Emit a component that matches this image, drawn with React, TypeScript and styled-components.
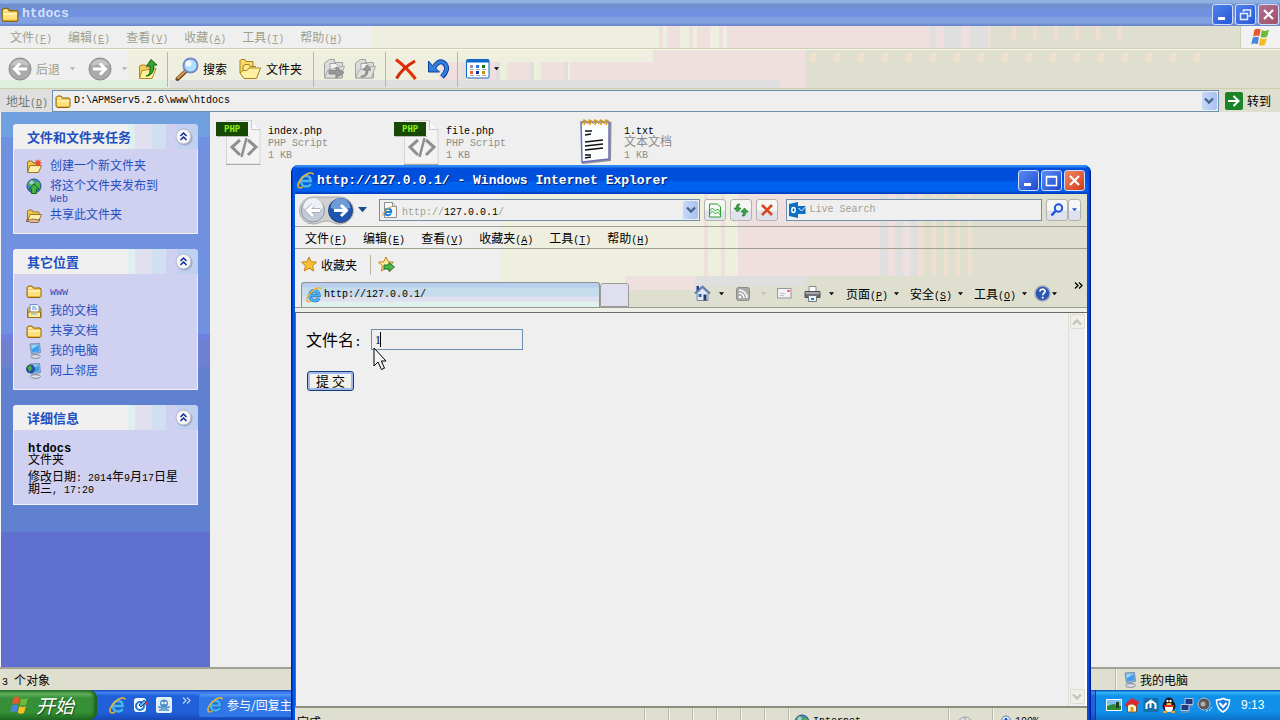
import React from "react";
import styled, { createGlobalStyle, css } from "styled-components";

const Global = createGlobalStyle`
  * { box-sizing: border-box; }
  body {
    margin: 0;
    overflow: hidden;
    font: 12px/16px "Noto Sans CJK SC", "Liberation Sans", sans-serif;
    color: #000;
    background: #efefef;
  }
  button, input { font: inherit; color: inherit; margin: 0; padding: 0; border: 0; background: none; }
  ul, p, h2 { margin: 0; padding: 0; list-style: none; }
  svg { display: block; flex: none; }
`;

/* ---------- text ---------- */

const Latin = styled.span<{ $size?: number }>`
  font-family: "Liberation Mono", monospace;
  font-size: ${(p) => p.$size ?? 10}px;
  line-height: 0;
  white-space: pre-wrap;
`;

/** Sets Latin runs in the half-width face and leaves Chinese runs alone. */
const Mixed = ({ children, size }: { children: string; size?: number }) => (
  <>
    {children.split(/([\x20-\x7e]+)/).map((run, i) =>
      i % 2 ? <Latin key={i} $size={size}>{run}</Latin> : run
    )}
  </>
);

const Caption = ({ label, hot }: { label: string; hot: string }) => (
  <span>
    {label}
    <Latin>(<u>{hot}</u>)</Latin>
  </span>
);

/* ---------- icons ---------- */

const Folder = ({ s = 16 }: { s?: number }) => (
  <svg width={s} height={s} viewBox="0 0 16 16">
    <path d="M1 13V4.5L2.5 3H6l1.5 2H14l1 1v7.5L14 14.5H2z" fill="#e9b93a" stroke="#8f6410" />
    <path d="M2 6.8h12.2V13H2z" fill="#ffe07a" />
    <path d="M2 6.8h12.2v2H2z" fill="#fff2b4" />
    <path d="M2 5l1-1h2.500l1.500 2H2z" fill="#fff0a0" />
  </svg>
);

const OpenFolder = ({ children }: { children?: React.ReactNode }) => (
  <svg width="16" height="16" viewBox="0 0 16 16">
    <path d="M1.500 14V4l1-1H6l1 2h6v3" fill="#f0c850" stroke="#9b7420" />
    <path d="M1.500 14.500L4 7.500h11.500L12.500 14.500z" fill="#fff0a8" stroke="#9b7420" />
    {children}
  </svg>
);

const Globe = ({ s = 16, arrow }: { s?: number; arrow?: boolean }) => (
  <svg width={s} height={s} viewBox="0 0 16 16">
    <circle cx="8" cy="8" r="7" fill="#3f86d8" stroke="#234f80" />
    <path d="M3 4l3-2 3 1-1 3-3 2-3-1zM10 4l3 0 1 5-3 3-2-3zM4 10l3 1v3l-3-2z" fill="#57b545" />
    <circle cx="5.500" cy="4.500" r="2" fill="#d6efff" opacity=".6" />
    {arrow && <path d="M8 6l5 5h-2.500v4.500h-5V11H3z" fill="#46b046" stroke="#12651c" />}
  </svg>
);

const Monitor = ({ s = 16, globe }: { s?: number; globe?: boolean }) => (
  <svg width={s} height={s} viewBox="0 0 16 16">
    <path d="M4 1l9.500-.5L14.500 9.500l-9 1.500z" fill="#8fb6dc" stroke="#7690b0" />
    <path d="M5.200 2.300l7.300-.4.8 6.400-7.200 1z" fill="#3f9df0" />
    <path d="M5.200 2.300l7.300-.4-6.800 4.300z" fill="#9ad8ff" />
    <path d="M8 10.500h4v2H8z" fill="#a9b3c4" />
    <ellipse cx="9.500" cy="13.500" rx="5" ry="1.800" fill="#dfe4ec" stroke="#7d8798" />
    {globe && (
      <>
        <circle cx="4.500" cy="6" r="4" fill="#2458a8" stroke="#1c4a78" />
        <path d="M1.500 4l3-1.500 1.500 3-2.500 3.500z" fill="#52b03e" />
      </>
    )}
  </svg>
);

const DocsFolder = () => (
  <svg width="16" height="16" viewBox="0 0 16 16">
    <path d="M1.500 6l2-2h10l1.500 2v8.500h-13.500z" fill="#ecc24c" stroke="#94701c" />
    <path d="M4 1.500h7l2 2V10H4z" fill="#f7fbff" stroke="#6c90c4" />
    <path d="M6 4h4M6 6h5" stroke="#5c8cd8" />
    <path d="M2 9h12.500v5.500H2z" fill="#ffeda0" stroke="#94701c" />
    <path d="M5 11h6" stroke="#7fa6d4" />
  </svg>
);

const IE = ({ s = 16 }: { s?: number }) => (
  <svg width={s} height={s} viewBox="0 0 16 16">
    <path d="M12.800 11.200C12 12.800 10.500 13.600 8.500 13.600 5.500 13.600 3.800 11.500 3.800 8.700 3.800 5.800 5.700 3.800 8.500 3.800c2.700 0 4.400 1.900 4.400 4.700H4.500" fill="none" stroke="#1668b8" strokeWidth="3.400" />
    <path d="M12.800 11.200C12 12.800 10.500 13.600 8.500 13.600 5.500 13.600 3.800 11.500 3.800 8.700 3.800 5.800 5.700 3.800 8.500 3.800c2.700 0 4.400 1.900 4.400 4.700H4.500" fill="none" stroke="#4cb4f6" strokeWidth="2.200" />
    <path d="M2.300 15C-.5 14 1.300 8.500 5.700 4.500 10 .7 15-.3 15.300 2.400" fill="none" stroke="#efb530" strokeWidth="1.500" />
    <path d="M2.300 15c1 .2 2.300-.4 3.200-1" fill="none" stroke="#efb530" strokeWidth="1.200" />
  </svg>
);

const IEPage = () => (
  <svg width="16" height="16" viewBox="0 0 16 16">
    <path d="M2.500.5h8l4 4v11h-12z" fill="#fafafa" stroke="#909090" />
    <path d="M10.500.5v4h4" fill="#e4e4e4" stroke="#909090" />
    <path d="M9 11.500C8.500 12.800 7.500 13.300 6.200 13.300 4.200 13.300 3 12 3 10s1.300-3.300 3.200-3.300S9.200 8 9.200 9.900H3.500" fill="none" stroke="#1c7fdc" strokeWidth="2" />
    <path d="M1 14C0 12.500 4 6.500 10 4.500" fill="none" stroke="#e8a820" strokeWidth="1.200" />
  </svg>
);

const Flag = ({ s = 20 }: { s?: number }) => (
  <svg width={s} height={s} viewBox="0 0 20 20">
    <path d="M3.500 2.800C5.500 1.400 7.500 1.400 9.700 2.500L8.300 9.200C6.300 8.200 4.200 8.200 2 9.400z" fill="#e8562c" />
    <path d="M10.900 3C13 4.200 15.300 4.200 18 2.800L16.200 9.600c-2.300 1.300-4.400 1.300-6.600.1z" fill="#6fb83c" />
    <path d="M1.700 10.700c2.200-1.200 4.300-1.200 6.300-.2L6.600 17.200C4.500 16.200 2.400 16.200.2 17.400z" fill="#4a86e0" />
    <path d="M9.300 11c2.200 1.200 4.300 1.200 6.600-.1l-1.800 6.800c-2.200 1.300-4.200 1.300-6.300.1z" fill="#f6bd24" />
  </svg>
);

const RoundArrow = ({ right }: { right?: boolean }) => (
  <svg width="24" height="24" viewBox="0 0 24 24">
    <circle cx="12" cy="12" r="11" fill="#a9a9a9" stroke="#8c8c8c" />
    <path d="M3 9a9.500 9.500 0 0 1 18 0c-5-2-13-2-18 0z" fill="#c6c6c6" />
    <path d="M19 12H7M12 6.500L6.500 12l5.500 5.500" fill="none" stroke="#fff" strokeWidth="3" transform={right ? "rotate(180 12 12)" : undefined} />
  </svg>
);

const UpFolder = () => (
  <svg width="22" height="22" viewBox="0 0 22 22">
    <path d="M2.500 20V8l2-1h4l1 2h7v4" fill="#f2cf5c" stroke="#b08824" />
    <path d="M2.500 20.500L5 12.500l14-2-4 10z" fill="#fff09a" stroke="#b08824" />
    <path d="M9 18c4-1 4.500-5 4-10H9.500L14 1.500 20 7h-3.200c.4 6-2 11-7.800 11z" fill="#3aa32e" stroke="#12621a" />
  </svg>
);

const Magnifier = () => (
  <svg width="24" height="24" viewBox="0 0 24 24">
    <path d="M11 14L2.500 22" stroke="#6a4a24" strokeWidth="4" strokeLinecap="round" />
    <path d="M10 14.500L3 21" stroke="#dd9a48" strokeWidth="2" strokeLinecap="round" />
    <circle cx="15.500" cy="8.500" r="7" fill="#aee0ff" stroke="#7489cc" strokeWidth="2" />
    <circle cx="13.500" cy="6.500" r="3" fill="#fff" opacity=".8" />
  </svg>
);

const Folders = () => (
  <svg width="24" height="22" viewBox="0 0 24 22">
    <path d="M2 15V2.500L3 1.500h4l1 2h7V8" fill="#f6d968" stroke="#a9811e" />
    <path d="M5 19V8l2-1.500h4l1 2h6" fill="#ffe98c" stroke="#a9811e" />
    <path d="M2 15l4 5.500h12.500L22.500 10H11l-2 2.500H5z" fill="#fff1a0" stroke="#a9811e" />
  </svg>
);

const GreyTransfer = ({ up }: { up?: boolean }) => (
  <svg width="24" height="22" viewBox="0 0 24 22">
    <path d="M2.500 20V5l5-3.500h5v3h8V20z" fill="#dcdcdc" stroke="#a0a0a0" />
    <path d="M8 5.500h6l3 3V17H8z" fill="#f2f2f2" stroke="#a0a0a0" />
    <path d="M2.500 20l3.500-8 16.500-4-4 12z" fill="#e0e0dc" stroke="#a8a8a8" />
    <path d={up ? "M8 18c4 0 5-2 5-6h-3l4-5 4 5h-3c0 5-2 7-7 7z" : "M7 12.500h7V9l8 5.500-8 5.500v-4H7z"} fill="#989898" stroke="#858585" />
  </svg>
);

const Cross = () => (
  <svg width="24" height="24" viewBox="0 0 24 24">
    <path d="M2 2.500C8 7 17 16 21.500 22" stroke="#e23208" strokeWidth="3.200" fill="none" />
    <path d="M21 4C14 8 6 15 2.500 21.500" stroke="#d42a06" strokeWidth="3" fill="none" />
  </svg>
);

const Undo = () => (
  <svg width="22" height="22" viewBox="0 0 22 22">
    <path d="M6 11C9 5 13 2 17 5c5 4 2 10-2 14" fill="none" stroke="#0d3f9c" strokeWidth="5" />
    <path d="M1.500 3v11h11l-3.500-3.500-3.500-3z" fill="#2f7fdd" stroke="#0d3f9c" />
    <path d="M6 11C9 5 13 2 17 5c5 4 2 10-2 13.500" fill="none" stroke="#2f7fdd" strokeWidth="3" />
  </svg>
);

const Views = () => (
  <svg width="24" height="20" viewBox="0 0 24 20">
    <rect x=".5" y=".5" width="22.500" height="18.500" rx="1" fill="#fff" stroke="#1068c8" />
    <path d="M1 1h22v2.500H1z" fill="#1068c8" />
    <path d="M4 6h3v3H4z" fill="#8c8cc4" /><path d="M10 6h3v3h-3z" fill="#2878e8" /><path d="M16 6h3v3h-3z" fill="#187818" />
    <path d="M4 12h3v3H4z" fill="#e86038" /><path d="M10 12h3v3h-3z" fill="#1030a0" /><path d="M16 12h3v3h-3z" fill="#c8980c" />
    <path d="M4 10.500h4M10 10.500h4M16 10.500h4M4 16.500h4M10 16.500h4M16 16.500h4" stroke="#aaa" />
  </svg>
);

const Caret = ({ fill = "#000", w = 5 }: { fill?: string; w?: number }) => (
  <svg width={w} height={w > 5 ? 6 : 4} viewBox="0 0 6 4"><path d="M0 0h6L3 3.500z" fill={fill} /></svg>
);

const Chevron = ({ color = "#46648c" }: { color?: string }) => (
  <svg width="10" height="8" viewBox="0 0 10 8"><path d="M1 1.500l4 4 4-4" fill="none" stroke={color} strokeWidth="2.400" /></svg>
);

const DoubleRight = ({ color = "#000" }: { color?: string }) => (
  <svg width="9" height="7" viewBox="0 0 9 7"><path d="M1 .5l3 3-3 3M5 .5l3 3-3 3" fill="none" stroke={color} strokeWidth="1.300" /></svg>
);

const Collapse = () => (
  <svg width="18" height="18" viewBox="0 0 18 18">
    <circle cx="9.800" cy="9.800" r="7.800" fill="#8c98b8" opacity=".6" />
    <circle cx="8.500" cy="8.500" r="7.500" fill="#f6f6f6" stroke="#b0b4cc" />
    <path d="M5.500 8l3-3 3 3M5.500 12l3-3 3 3" fill="none" stroke="#0c2c98" strokeWidth="1.500" />
  </svg>
);

const PhpFile = () => (
  <svg width="48" height="48" viewBox="0 0 48 48">
    <path d="M10.500 2.500h25l8.500 9v34.500h-33.500z" fill="#f3f3f3" stroke="#d4d4d4" />
    <path d="M10 46.500h34.500" stroke="#a8a8a8" />
    <path d="M35.500 2.500v9H44" fill="#fafafa" stroke="#c8c8c8" />
    <path d="M0 4h32v14H0z" fill="#184806" />
    <path d="M1 18.500h32" stroke="#b8b8b8" />
    <text x="8" y="14" fontFamily="DejaVu Sans Mono" fontWeight="bold" fontSize="9" fill="#8cf018">PHP</text>
    <path d="M24 22l-8 7 8 8M32 22l8 7-8 8" fill="none" stroke="#8f8f8f" strokeWidth="3" />
    <path d="M30.500 20l-5 19" stroke="#8f8f8f" strokeWidth="2.500" />
  </svg>
);

const Notepad = () => (
  <svg width="48" height="48" viewBox="0 0 48 48">
    <path d="M10 45l28-3 .5-38" fill="none" stroke="#8f8f96" strokeWidth="2" />
    <path d="M9 4h28v37L10 44z" fill="#fbfdff" stroke="#6d70b8" strokeWidth="1.500" />
    <path d="M10 6l2-4 2 1-2 4M15.500 6l2-4 2 1-2 4M21 6l2-4 2 1-2 4M26.500 6l2-4 2 1-2 4M32 6l2-4 2 1-2 4" fill="none" stroke="#d49a1c" strokeWidth="1.500" />
    <path d="M13 13h7M13 17l6-1M13 24l18-2M13 28l18-2M13 32l18-2M13 37h6M13 40l6-1" stroke="#111" strokeWidth="1.500" />
  </svg>
);

const Star = ({ add }: { add?: boolean }) => (
  <svg width="17" height="17" viewBox="0 0 17 17">
    <path d="M8 1l2.200 4.700 5.300.5-4 3.500 1.200 5.300L8 12.200 3.300 15l1.200-5.300-4-3.500 5.300-.5z" fill={add ? "#fbe9a0" : "#fbbf33"} stroke="#c28416" />
    {add && <path d="M6 9h5V6.500L16.500 11 11 15.500V13H6z" fill="#4db848" stroke="#1c7428" />}
  </svg>
);

const Home = () => (
  <svg width="17" height="17" viewBox="0 0 17 17">
    <path d="M3 8v7.500h11V8L8.500 3z" fill="#e0e6f2" stroke="#7b86a4" />
    <path d="M1 8.500L8.500 1.500 16 8.500" fill="none" stroke="#5b7fb4" strokeWidth="2" />
    <path d="M2.500 1h2.500v3l-2.500 2z" fill="#203c90" />
    <path d="M4.500 9h3v3h-3z" fill="#2a62b8" /><path d="M9.500 9.500h3v6h-3z" fill="#2c3c68" />
  </svg>
);

const Feed = () => (
  <svg width="14" height="14" viewBox="0 0 14 14">
    <rect x=".5" y=".5" width="13" height="13" rx="2" fill="#a9a9a9" stroke="#8c8c8c" />
    <circle cx="4" cy="10" r="1.300" fill="#fff" />
    <path d="M3 6a5 5 0 0 1 5 5M3 3a8 8 0 0 1 8 8" fill="none" stroke="#fff" strokeWidth="1.500" />
  </svg>
);

const Mail = () => (
  <svg width="15" height="11" viewBox="0 0 15 11">
    <rect x=".5" y=".5" width="13.500" height="9.500" fill="#f2f2f4" stroke="#98989c" />
    <path d="M10.500 2h2v2h-2z" fill="#e8442c" /><path d="M3 5.500h5M3 7.500h4" stroke="#c0c0c8" />
  </svg>
);

const Printer = () => (
  <svg width="17" height="16" viewBox="0 0 17 16">
    <path d="M5 .5h7V6H5z" fill="#fff" stroke="#888" />
    <path d="M1 5.500h15v6H1z" fill="#6d6d70" stroke="#4c4c50" />
    <path d="M1.500 6h14v2h-14z" fill="#a8a8ac" />
    <path d="M4.500 9.500h8v6h-8z" fill="#eaf2fc" stroke="#777" /><path d="M7 12h3v2H7z" fill="#2d78d8" />
  </svg>
);

const Help = () => (
  <svg width="17" height="17" viewBox="0 0 17 17">
    <circle cx="8.500" cy="8.500" r="7.500" fill="#2c58b4" stroke="#9ea8bc" strokeWidth="1.500" />
    <path d="M6 6.500C6 3.500 11 3.500 11 6.300c0 1.700-2.300 1.900-2.300 4" fill="none" stroke="#fff" strokeWidth="1.700" />
    <path d="M7.800 11.800h1.900v1.700H7.800z" fill="#fff" />
  </svg>
);

const TravelPair = () => (
  <svg width="55" height="29" viewBox="0 0 55 29">
    <path d="M14 1h27a13 13 0 0 1 0 27c-7 0-8-3-13.500-3S20 28 14 28A13 13 0 0 1 14 1z" fill="#d0d0d0" stroke="#a8a8a8" />
    <circle cx="14" cy="14.500" r="11.500" fill="#c3cad8" stroke="#8d939f" />
    <path d="M4 12a10 10 0 0 1 20 0c-6 3-14 3-20 0z" fill="#eef1f6" />
    <path d="M21 14.500H9M14 9l-5.500 5.500L14 20" fill="none" stroke="#a0a8b4" strokeWidth="4.500" />
    <path d="M21 14.500H9M14 9l-5.500 5.500L14 20" fill="none" stroke="#fff" strokeWidth="3" />
    <circle cx="41.500" cy="14.500" r="12" fill="#1d55b0" stroke="#274474" />
    <path d="M31.500 12a10 10 0 0 1 20 0c-6 2-14 2-20 0z" fill="#6f9cd6" />
    <path d="M35 14.500h12M42 9l5.500 5.500L42 20" fill="none" stroke="#fff" strokeWidth="3" />
  </svg>
);

const BrokenPage = () => (
  <svg width="14" height="15" viewBox="0 0 14 15">
    <path d="M1.500 1h8l3 3v10h-11z" fill="#f4fbf2" stroke="#2f9a38" />
    <path d="M1.500 8l3-3 3 3 2-2 3 3M1.500 11l3-3 3 3 2-2 3 3" fill="none" stroke="#2f9a38" />
  </svg>
);

const Refresh = () => (
  <svg width="16" height="16" viewBox="0 0 16 16">
    <path d="M7 2C3.500 1.500 3.200 4 3.200 6H.8L4.500 10 8.200 6H5.700C5.700 4 5.700 3.500 7 2z" fill="#35a53c" stroke="#146a22" strokeWidth=".6" />
    <path d="M9 14c3.500.5 3.800-2 3.800-4h2.400L11.500 6 7.800 10h2.500c0 2 0 2.500-1.300 4z" fill="#35a53c" stroke="#146a22" strokeWidth=".6" />
  </svg>
);

const StopX = () => (
  <svg width="14" height="14" viewBox="0 0 14 14"><path d="M2 2l10 10M12 2L2 12" stroke="#d84820" strokeWidth="2.600" /></svg>
);

const MailSearch = () => (
  <svg width="17" height="16" viewBox="0 0 17 16">
    <path d="M0 2l9-2v16l-9-2z" fill="#0a70c4" /><path d="M9 4h7.500v8H9z" fill="#0a70c4" />
    <path d="M9.500 6l3 3 4-4" fill="none" stroke="#fff" />
    <ellipse cx="4.500" cy="8" rx="1.700" ry="2.500" fill="none" stroke="#fff" strokeWidth="1.400" />
  </svg>
);

const Lens = () => (
  <svg width="14" height="14" viewBox="0 0 14 14">
    <circle cx="8.500" cy="5" r="3.700" fill="#e4f0fe" stroke="#1c54dc" strokeWidth="2" /><path d="M5.500 8L1.500 12.500" stroke="#1c54dc" strokeWidth="2.600" />
  </svg>
);

const ZoomPlus = () => (
  <svg width="14" height="14" viewBox="0 0 14 14">
    <circle cx="8" cy="5.500" r="4.500" fill="#dcecfc" stroke="#5c7cac" /><path d="M8 3v5M5.500 5.500h5" stroke="#1c50c0" strokeWidth="2" /><path d="M5 9l-3 3.500" stroke="#5c7cac" strokeWidth="2" />
  </svg>
);

const Pointer = styled.svg`
  position: absolute;
  left: 77px;
  top: 34px;
`;

/* ---------- explorer window ---------- */

const hazeTop = css`
  background:
    repeating-linear-gradient(90deg, transparent 0 9px, #efdfdf 9px 13px, transparent 13px 17px, #efdfdf 17px 30px) 650px 0 / 90px 100% no-repeat,
    repeating-linear-gradient(90deg, #dfdfdf 0 6px, #efdfdf 6px 14px, #dfdfdf 14px 26px) 930px 0 / 60px 100% no-repeat,
    repeating-linear-gradient(90deg, transparent 0 12px, #efdfcf 12px 16px, transparent 16px 21px) 1000px 0 / 130px 65% no-repeat,
    linear-gradient(90deg, #efefef 0 29%, #efefdf 29% 57%, #efdfdf 57% 77%, #dfdfcf 77%);
`;

const hazeLow = css`
  background:
    linear-gradient(#dfdfdf, #dfdfdf) 170px 30px / 610px 8px no-repeat,
    linear-gradient(#dfefdf, #dfefdf) 0 30px / 170px 8px no-repeat,
    repeating-linear-gradient(90deg, transparent 0 7px, #efdfdf 7px 30px, #dfdfdf 30px 34px) 432px 12px / 140px 18px no-repeat,
    linear-gradient(#efdfdf, #efdfdf) 570px 12px / 230px 18px no-repeat,
    repeating-linear-gradient(90deg, transparent 0 10px, #efdfcf 10px 16px, transparent 16px 24px) 800px 3px / 410px 9px no-repeat,
    linear-gradient(90deg, #efefef 0 10%, #efefdf 10% 51%, #efdfdf 51% 63%, #dfdfcf 63%);
`;

const Desktop = styled.div`
  position: relative;
  height: 100vh;
  overflow: hidden;
  display: flex;
  flex-direction: column;
`;

const Explorer = styled.section`
  flex: 1;
  min-height: 0;
  display: flex;
  flex-direction: column;
`;

const TitleBar = styled.header<{ $active?: boolean }>`
  height: ${(p) => (p.$active ? 29 : 26)}px;
  flex: none;
  display: flex;
  align-items: center;
  gap: 3px;
  padding: 2px ${(p) => (p.$active ? 2 : 1)}px 0;
  color: ${(p) => (p.$active ? "#fff" : "#d6e2fa")};
  text-shadow: ${(p) => (p.$active ? "1px 1px #00206c" : "none")};
  background: ${(p) =>
    p.$active
      ? "linear-gradient(#2f86f0 0 2px, #004fdc 3px 16px, #0060f0 17px 26px, #0040c0 28px)"
      : "linear-gradient(#8fb0e0 0 3px, #6f8fd0 4px 8px, #7090e0 10px 16px, #80a0e0 18px 23px, #6c88d0 25px)"};
`;

const TitleText = styled.span`
  flex: 1;
  font: bold 13px/16px "Liberation Mono", monospace;
`;

const WinButton = styled.button<{ $tone: string }>`
  width: 21px;
  height: 21px;
  display: grid;
  place-items: center;
  border: 1px solid #d0dcfa;
  border-radius: 3px;
  background: ${(p) => p.$tone};
`;

const WinButtons = styled.div`
  display: flex;
  gap: 2px;
`;

const MenuBar = styled.nav<{ $muted?: boolean }>`
  height: ${(p) => (p.$muted ? 23 : 22)}px;
  flex: none;
  display: flex;
  align-items: center;
  gap: 16px;
  padding-left: 10px;
  color: ${(p) => (p.$muted ? "#9f9f8c" : "#000")};
  border-bottom: 1px solid ${(p) => (p.$muted ? "#cfcfaf" : "#9f9f90")};
  ${(p) => p.$muted && hazeTop}
  button { white-space: nowrap; }
`;

const FlagBox = styled.div`
  align-self: stretch;
  width: 40px;
  margin-left: auto;
  display: grid;
  place-items: center;
  background: #f2f2f2;
  border-left: 1px solid #cfcfaf;
`;

const ToolBar = styled.div`
  height: 40px;
  flex: none;
  display: flex;
  align-items: center;
  padding-left: 8px;
  border-top: 1px solid #f8f8f0;
  border-bottom: 1px solid #cfcfaf;
  ${hazeLow}
`;

const ToolButton = styled.button<{ $w: number; $muted?: boolean }>`
  width: ${(p) => p.$w}px;
  display: flex;
  align-items: center;
  gap: 4px;
  white-space: nowrap;
  color: ${(p) => (p.$muted ? "#9f9f8c" : "#000")};
  svg:nth-child(2) { margin-left: ${(p) => (p.$muted ? 6 : 0)}px; }
`;

const Rule = styled.span<{ $h: number; $gap: number }>`
  width: 1px;
  height: ${(p) => p.$h}px;
  margin-right: ${(p) => p.$gap}px;
  background: #b8b8a0;
`;

const AddressRow = styled.form`
  height: 23px;
  flex: none;
  display: flex;
  align-items: center;
  background: #dfdfcf;
`;

const AddressLabel = styled.label`
  width: 52px;
  padding-left: 6px;
  color: #77776c;
  background: #dfdfdf;
  line-height: 22px;
`;

const Field = styled.div<{ $h: number; $grow?: number }>`
  flex: ${(p) => p.$grow ?? 1} 1 0;
  min-width: 0;
  height: ${(p) => p.$h}px;
  display: flex;
  align-items: center;
  gap: 3px;
  padding: 0 1px 0 2px;
  background: #efefef;
  border: 1px solid #6f8faf;
`;

const FieldInput = styled.input<{ $color?: string }>`
  flex: 1;
  min-width: 0;
  font: 10px/16px "Liberation Mono", monospace;
  color: ${(p) => p.$color ?? "#000"};
  outline: none;
  &::placeholder { color: #9f9f90; opacity: 1; }
`;

const Url = styled.span`
  flex: 1;
  padding-left: 1px;
  color: #9f9f90;
  b { color: #000; font-weight: normal; }
`;

const DropButton = styled.button`
  width: 15px;
  height: 18px;
  display: grid;
  place-items: center;
  border-radius: 2px;
  background: linear-gradient(90deg, #c8d8f8, #a8c0f0);
`;

const GoButton = styled.button`
  display: flex;
  align-items: center;
  gap: 4px;
  padding: 0 9px 0 6px;
`;

const Body = styled.div`
  flex: 1;
  min-height: 0;
  display: flex;
  background: #efefef;
`;

const Sidebar = styled.aside`
  width: 210px;
  flex: none;
  padding: 12px 12px 0 12px;
  display: flex;
  flex-direction: column;
  gap: 15px;
  border-left: 1px solid #f4f4f4;
  background: linear-gradient(#70a0e0 0 25px, #7090e0 25px 222px, #7080e0 222px 229px, #7080d0 229px 255px, #6080d0 255px 420px, #6070d0 420px);
`;

const Panel = styled.section`
  border-radius: 3px 3px 0 0;
  overflow: hidden;
`;

const PanelHead = styled.header`
  height: 25px;
  padding: 0 5px 0 14px;
  display: flex;
  align-items: center;
  justify-content: space-between;
  color: #1f4fc0;
  background: linear-gradient(90deg, #f0f0f0 0 115px, #e0f0f0 115px 122px, #e0e0f0 122px 139px, #d0e0f0 139px 153px, #d0d0f0 153px 164px, #c0d0f0 164px);
  h2 { font-size: 13px; line-height: 16px; }
`;

const PanelBody = styled.div`
  padding: 7px 12px 10px 12px;
  border: 1px solid #f0f0f8;
  border-top: 0;
  background: #d0d0f0;
`;

const TaskList = styled.ul`
  display: flex;
  flex-direction: column;
  gap: 2px;
`;

const Task = styled.li`
  min-height: 18px;
  display: flex;
  align-items: flex-start;
  gap: 8px;
  svg { margin-top: 2px; }
  a {
    width: 112px;
    padding-top: 3px;
    line-height: 12px;
    color: #1f4fc0;
    text-decoration: none;
  }
`;

const Details = styled.div`
  padding: 4px 0 0 2px;
  line-height: 12px;
  p + p { margin-top: 5px; }
`;

const FileGrid = styled.ul`
  flex: 1;
  display: flex;
  align-items: flex-start;
  padding: 6px 0 0 6px;
`;

const FileTile = styled.li`
  width: 178px;
  display: flex;
  gap: 4px;
  color: #8c8c8c;
  line-height: 12px;
  p { padding-top: 5px; }
  b { font-weight: normal; color: #000; }
`;

const StatusBar = styled.footer`
  height: 23px;
  flex: none;
  display: flex;
  align-items: center;
  justify-content: space-between;
  padding: 0 1px 0 2px;
  border-top: 2px solid #a0a094;
  background: #dfdfcf;
`;

const StatusCell = styled.span<{ $w: number }>`
  width: ${(p) => p.$w}px;
  flex: none;
  align-self: stretch;
  display: flex;
  align-items: center;
  gap: 3px;
  padding-left: 5px;
  border-left: 1px solid #b8b8ac;
  box-shadow: inset 1px 0 #f4f4ec;
`;

/* ---------- taskbar ---------- */

const TaskBar = styled.footer`
  height: 30px;
  flex: none;
  display: flex;
  align-items: center;
  color: #fff;
  background: linear-gradient(#1f50c0 0 1px, #3f80f0 2px 3px, #2060d8 6px 22px, #1848b8);
`;

const StartButton = styled.button`
  width: 97px;
  height: 30px;
  display: flex;
  align-items: center;
  gap: 6px;
  padding-left: 10px;
  color: #fff;
  font-size: 19px;
  line-height: 28px;
  font-style: italic;
  text-shadow: 1px 1px 1px #174a17;
  border-radius: 0 8px 8px 0;
  background: linear-gradient(#2c7430, #5fae58 4px, #38903a 8px, #349034 22px, #1f6a24);
  box-shadow: inset -3px 0 3px #1f6020;
`;

const QuickLaunch = styled.div`
  width: 102px;
  display: flex;
  align-items: center;
  gap: 7px;
  padding-left: 12px;
  svg:last-child { align-self: flex-start; margin: 0 0 0 3px; }
`;

const TaskButton = styled.button`
  width: 160px;
  height: 23px;
  display: flex;
  align-items: center;
  gap: 4px;
  padding-left: 8px;
  color: #fff;
  border-radius: 3px;
  background: linear-gradient(#5a98f8, #3078e8 4px, #3078e8);
`;

const Tray = styled.div`
  width: 185px;
  height: 30px;
  margin-left: auto;
  display: flex;
  align-items: center;
  gap: 2px;
  padding-left: 10px;
  border-left: 1px solid #0c3c98;
  background: linear-gradient(#1060c0 0 1px, #30b0f8 2px 3px, #1090e8 6px 22px, #0c70c8);
  time { margin-left: 8px; font: 12px/16px "Liberation Sans", sans-serif; }
`;

/* ---------- browser window ---------- */

const Browser = styled.section`
  position: absolute;
  left: 291px;
  top: 165px;
  width: 800px;
  height: 570px;
  display: flex;
  flex-direction: column;
  padding: 0 4px;
  border-radius: 7px 7px 0 0;
  overflow: hidden;
  background: linear-gradient(90deg, #0020a0 0 1px, #0058e8 2px 4px, transparent 4px calc(100% - 4px), #0050e0 calc(100% - 4px) calc(100% - 2px), #001890 calc(100% - 1px)), #0050e0;
`;

const Chrome = styled.div`
  flex: none;
  border-bottom: 4px solid #efefea;
  background:
    linear-gradient(#efdfdf, #efdfdf) 330px 82px / 70px 14px no-repeat,
    linear-gradient(#dfdfdf, #dfdfdf) 400px 82px / 110px 10px no-repeat,
    linear-gradient(#dfdfcf, #dfdfcf) 330px 82px / 100% 40px no-repeat,
    repeating-linear-gradient(90deg, transparent 0 9px, #efdfdf 9px 13px, transparent 13px 17px) 400px 0 / 60px 82px no-repeat,
    repeating-linear-gradient(90deg, #dfdfdf 0 8px, #efdfdf 8px 15px) 585px 0 / 40px 82px no-repeat,
    repeating-linear-gradient(90deg, #efdfcf 0 4px, transparent 4px 12px) 625px 0 / 60px 82px no-repeat,
    linear-gradient(90deg, #efefef 0 26%, #efefdf 26% 56%, #efdfdf 56% 77%, #dfdfcf 77%);
`;

const NavRow = styled.form`
  height: 33px;
  display: flex;
  align-items: center;
  gap: 4px;
  padding: 0 6px 0 4px;
  border-bottom: 1px solid #9f9f90;
`;

const PageMenu = styled.button`
  width: 17px;
`;

const IconButton = styled.button<{ $w?: number }>`
  width: ${(p) => p.$w ?? 22}px;
  height: 22px;
  display: grid;
  place-items: center;
  border: 1px solid #b0b4b0;
  border-radius: 3px;
  background: linear-gradient(#f6f6f4 0 10px, #dfe2ec 11px);
`;

const SearchPair = styled.div`
  display: flex;
`;

const FavRow = styled.div`
  height: 33px;
  display: flex;
  align-items: center;
  padding: 0 0 2px 6px;
`;

const TabRow = styled.div`
  height: 26px;
  display: flex;
  align-items: flex-end;
  padding-left: 6px;
  border-bottom: 1px solid #9a9a90;
`;

const Tab = styled.button`
  width: 299px;
  height: 25px;
  display: flex;
  align-items: center;
  gap: 2px;
  padding-left: 4px;
  border: 1px solid #8c8f98;
  border-bottom: 0;
  border-radius: 3px 3px 0 0;
  background: linear-gradient(#b8cfee 0 4px, #c4dcec 5px 13px, #dfdfef 14px 18px, #e0f0ec 19px);
`;

const NewTab = styled.button`
  width: 29px;
  height: 24px;
  border: 1px solid #9a9a98;
  border-radius: 3px 3px 0 0;
  background: #dfdfef;
`;

const Commands = styled.div`
  flex: 1;
  align-self: stretch;
  display: flex;
  align-items: center;
  padding: 0 4px 2px 0;
  justify-content: flex-end;
`;

const Command = styled.button<{ $w: number; $gap?: number }>`
  width: ${(p) => p.$w}px;
  display: flex;
  align-items: center;
  gap: ${(p) => p.$gap ?? 6}px;
  white-space: nowrap;
`;

const More = styled.button`
  width: 9px;
  align-self: flex-start;
`;

const Viewport = styled.main`
  flex: none;
  height: 394px;
  display: flex;
  background: #efefef;
  border: 1px solid #706864;
  border-width: 1px 0 0 1px;
`;

const Page = styled.form`
  position: relative;
  flex: 1;
  display: flex;
  flex-direction: column;
  align-items: flex-start;
  gap: 21px;
  padding: 16px 10px;
`;

const FormLine = styled.div`
  display: flex;
  align-items: center;
  label { width: 65px; font-size: 16px; line-height: 21px; white-space: nowrap; }
`;

const NameBox = styled.span`
  width: 152px;
  height: 21px;
  display: flex;
  align-items: center;
  padding-left: 3px;
  border: 1px solid #6f8faf;
  input {
    width: 100%;
    font: 12px/16px "Liberation Serif", serif;
    outline: none;
  }
`;

const TextCursor = styled.i`
  position: absolute;
  left: 84px;
  top: 19px;
  width: 1px;
  height: 15px;
  background: #000;
`;

const Submit = styled.button`
  width: 47px;
  height: 20px;
  margin-left: 1px;
  line-height: 14px;
  font-size: 13px;
  word-spacing: normal;
  white-space: pre;
  border: 1px solid #103c78;
  border-radius: 3px;
  background: linear-gradient(#f4f4f4, #efefdf);
  box-shadow: inset 0 0 0 2px #a0b8ec;
`;

const ScrollBar = styled.div`
  width: 19px;
  display: flex;
  flex-direction: column;
  justify-content: space-between;
  align-items: center;
  padding: 1px 0 2px;
  border-left: 1px solid #dededa;
  border-right: 2px solid #fff;
`;

const ScrollButton = styled.button<{ $up?: boolean }>`
  width: 15px;
  height: 15px;
  display: grid;
  place-items: center;
  border: 1px solid #dcdcd0;
  border-radius: 2px;
  background: #f0f0e6;
  svg { transform: ${(p) => (p.$up ? "scaleY(-1)" : "none")}; }
`;

const BrowserStatus = styled.footer`
  height: 29px;
  flex: none;
  display: flex;
  align-items: center;
  padding-left: 2px;
  border-top: 2px solid #8c8c80;
  background: #dfdfcf;
  > span:first-child { flex: 1; }
`;

/* ---------- small glyphs for the window buttons ---------- */

const MinGlyph = () => <svg width="13" height="13"><path d="M2 9h7v3H2z" fill="#fff" /></svg>;
const MaxGlyph = () => <svg width="13" height="13"><path d="M1.500 2.500h10v9h-10zM1 3h11" fill="none" stroke="#fff" strokeWidth="1.500" /></svg>;
const RestoreGlyph = () => <svg width="13" height="13"><path d="M4.500 4V2h7v6h-2M1.500 5.500h7v6h-7z" fill="none" stroke="#e4ecff" strokeWidth="1.500" /></svg>;
const CloseGlyph = () => <svg width="13" height="13"><path d="M2 2l9 9M11 2l-9 9" stroke="#fff" strokeWidth="2.200" /></svg>;

const menu = (third: string) => [
  ["文件", "F"], ["编辑", "E"], ["查看", "V"], [third, "A"], ["工具", "T"], ["帮助", "H"],
];

const Menus = ({ fav }: { fav: string }) => (
  <>
    {menu(fav).map(([label, hot]) => (
      <button key={hot} type="button"><Caption label={label} hot={hot} /></button>
    ))}
  </>
);

const SidePanel = ({ title, children }: { title: string; children: React.ReactNode }) => (
  <Panel>
    <PanelHead><h2>{title}</h2><button aria-label="折叠"><Collapse /></button></PanelHead>
    <PanelBody>{children}</PanelBody>
  </Panel>
);

const Tasks = ({ items }: { items: [string, React.ReactNode][] }) => (
  <TaskList>
    {items.map(([label, icon]) => (
      <Task key={label}>{icon}<a href="#"><Mixed>{label}</Mixed></a></Task>
    ))}
  </TaskList>
);

const files = [
  { name: "index.php", kind: "PHP Script", icon: <PhpFile /> },
  { name: "file.php", kind: "PHP Script", icon: <PhpFile /> },
  { name: "1.txt", kind: "文本文档", icon: <Notepad /> },
];

const TrayIcons = () => (
  <>
    <svg width="16" height="16" viewBox="0 0 16 16"><path d="M.5 2.500h15v11H.5z" fill="#7cc0f0" stroke="#fff" /><path d="M1 9l6-2 8 2v4H1z" fill="#2c8a34" /><path d="M10 5h3v6h-3z" fill="#204020" /></svg>
    <svg width="17" height="16" viewBox="0 0 16 16"><path d="M3 7h9v8H3z" fill="#fff3c8" stroke="#7c5030" /><path d="M0 8L7 1l8 4-3 5-5-4-5 4z" fill="#e02430" /><path d="M6 10h3v5H6z" fill="#dc9428" /></svg>
    <svg width="16" height="16" viewBox="0 0 15 16"><path d="M0 1h15v14H0z" fill="#1470a8" /><path d="M3 12V7l4-3v7M8 4l4 3v5" fill="none" stroke="#fff" strokeWidth="2" /></svg>
    <svg width="16" height="16" viewBox="0 0 16 16"><ellipse cx="8" cy="9" rx="6.500" ry="6" fill="#181818" /><circle cx="8" cy="5" r="4.500" fill="#181818" /><ellipse cx="8" cy="11" rx="4" ry="4" fill="#fff" /><path d="M3 8h10v2H3z" fill="#e02c1c" /><path d="M5 6h6l-3 2z" fill="#f8b020" /><circle cx="6.500" cy="4" r="1.200" fill="#fff" /><circle cx="9.500" cy="4" r="1.200" fill="#fff" /><path d="M2 14h4v2H2zM10 14h4v2h-4z" fill="#f8a818" /></svg>
    <svg width="16" height="16" viewBox="0 0 15 16"><path d="M5.500 1.500h8v6h-8zM1.500 7.500h8v6h-8z" fill="#203c80" stroke="#b8c4dc" /><path d="M2 15h8M10 9h4" stroke="#8c98b0" /></svg>
    <svg width="16" height="16" viewBox="0 0 16 16"><circle cx="7" cy="7" r="6" fill="#585858" stroke="#b8b8b8" /><circle cx="6" cy="7" r="2.500" fill="#b0b0b0" /><path d="M12 14l3-4M9 15l2-2" stroke="#b8dcff" /></svg>
    <svg width="16" height="16" viewBox="0 0 16 16"><path d="M8 1.500c2 1 4 1.500 6.500 1.500C14.500 9 12 13 8 15 4 13 1.500 9 1.500 3 4 3 6 2.500 8 1.500z" fill="#1c7ce0" stroke="#fff" strokeWidth="1.500" /><path d="M4.500 6l3.500 4 3.500-4" fill="none" stroke="#fff" strokeWidth="2" /></svg>
  </>
);

export default function App() {
  return (
    <>
      <Global />
      <Desktop>
        <Explorer>
          <TitleBar>
            <Folder s={18} />
            <TitleText>htdocs</TitleText>
            <WinButtons>
              <WinButton $tone="linear-gradient(135deg, #5080e8, #2858d8)" aria-label="最小化"><MinGlyph /></WinButton>
              <WinButton $tone="linear-gradient(135deg, #5080e8, #2858d8)" aria-label="还原"><RestoreGlyph /></WinButton>
              <WinButton $tone="linear-gradient(135deg, #b07090, #a05068)" aria-label="关闭"><CloseGlyph /></WinButton>
            </WinButtons>
          </TitleBar>
          <MenuBar $muted>
            <Menus fav="收藏" />
            <FlagBox><Flag /></FlagBox>
          </MenuBar>
          <ToolBar>
            <ToolButton $w={80} $muted><RoundArrow />后退<Caret fill="#b0b0a8" /></ToolButton>
            <ToolButton $w={49} $muted><RoundArrow right /><Caret fill="#b0b0a8" /></ToolButton>
            <ToolButton $w={30} aria-label="向上"><UpFolder /></ToolButton>
            <Rule $h={35} $gap={7} />
            <ToolButton $w={63}><Magnifier />搜索</ToolButton>
            <ToolButton $w={75}><Folders />文件夹</ToolButton>
            <Rule $h={35} $gap={8} />
            <ToolButton $w={31} aria-label="移至"><GreyTransfer /></ToolButton>
            <ToolButton $w={32} aria-label="复制到"><GreyTransfer up /></ToolButton>
            <Rule $h={35} $gap={8} />
            <ToolButton $w={33} aria-label="删除"><Cross /></ToolButton>
            <ToolButton $w={30} aria-label="撤消"><Undo /></ToolButton>
            <Rule $h={35} $gap={8} />
            <ToolButton $w={40} aria-label="查看"><Views /><Caret /></ToolButton>
          </ToolBar>
          <AddressRow>
            <AddressLabel htmlFor="path"><Caption label="地址" hot="D" /></AddressLabel>
            <Field $h={22}>
              <Folder />
              <FieldInput id="path" defaultValue="D:\APMServ5.2.6\www\htdocs" />
              <DropButton type="button" aria-label="展开"><Chevron /></DropButton>
            </Field>
            <GoButton type="button">
              <svg width="18" height="18" viewBox="0 0 18 18"><rect width="18" height="18" rx="2" fill="#1c8428" /><path d="M3 9h10M8.500 4l5 5-5 5" fill="none" stroke="#fff" strokeWidth="2" /></svg>
              转到
            </GoButton>
          </AddressRow>
          <Body>
            <Sidebar>
              <SidePanel title="文件和文件夹任务">
                <Tasks items={[
                  ["创建一个新文件夹", <OpenFolder key="a"><path d="M12 1l1 2 2-1-1 2 2 1-2 1 1 2-2-1-1 2-1-2-2 1 1-2-2-1 2-1-1-2 2 1z" fill="#e8502c" /></OpenFolder>],
                  ["将这个文件夹发布到Web", <Globe key="b" arrow />],
                  ["共享此文件夹", <OpenFolder key="c"><path d="M0 13h4l2-1 8 1-2 2.500H4l-1-1H0z" fill="#e8b888" stroke="#604830" strokeWidth=".7" /></OpenFolder>],
                ]} />
              </SidePanel>
              <SidePanel title="其它位置">
                <Tasks items={[
                  ["www", <Folder key="a" />],
                  ["我的文档", <DocsFolder key="b" />],
                  ["共享文档", <Folder key="c" />],
                  ["我的电脑", <Monitor key="d" />],
                  ["网上邻居", <Monitor key="e" globe />],
                ]} />
              </SidePanel>
              <SidePanel title="详细信息">
                <Details>
                  <p><b><Latin $size={12}>htdocs</Latin></b><br />文件夹</p>
                  <p><Mixed>修改日期: 2014年9月17日星</Mixed><br /><Mixed>期三, 17:20</Mixed></p>
                </Details>
              </SidePanel>
            </Sidebar>
            <FileGrid>
              {files.map((f) => (
                <FileTile key={f.name}>
                  {f.icon}
                  <p><b><Mixed>{f.name}</Mixed></b><br /><Mixed>{f.kind}</Mixed><br /><Latin>1 KB</Latin></p>
                </FileTile>
              ))}
            </FileGrid>
          </Body>
          <StatusBar>
            <span><Mixed>3 个对象</Mixed></span>
            <StatusCell $w={164}><Monitor />我的电脑</StatusCell>
          </StatusBar>
        </Explorer>

        <TaskBar>
          <StartButton><Flag />开始</StartButton>
          <QuickLaunch>
            <IE s={17} />
            <svg width="16" height="16" viewBox="0 0 16 16"><rect x="1" y="1" width="12" height="14" rx="3" fill="#f4f8ff" /><circle cx="7" cy="9" r="4" fill="none" stroke="#1c78d0" strokeWidth="2" /><path d="M6 8l5-5 2 2-5 5z" fill="#68a8e8" stroke="#1c5090" /><path d="M12 5h3v3h-3z" fill="#e83020" /></svg>
            <svg width="16" height="16" viewBox="0 0 16 16"><rect width="16" height="16" rx="2" fill="#e4f0fa" /><circle cx="8" cy="6.500" r="4" fill="#4c90c8" /><circle cx="6.500" cy="6" r="1.200" fill="#fff" /><circle cx="9.500" cy="6" r="1.200" fill="#fff" /><path d="M2 10c2 0 3 1 4 0v3H3M14 10c-2 0-3 1-4 0v3h3M8 10v4" fill="none" stroke="#4c90c8" strokeWidth="1.500" /></svg>
            <DoubleRight color="#b8d0ff" />
          </QuickLaunch>
          <TaskButton><IE />参与/回复主题</TaskButton>
          <Tray><TrayIcons /><time>9:13</time></Tray>
        </TaskBar>

        <Browser>
          <TitleBar $active>
            <IE s={17} />
            <TitleText>http://127.0.0.1/ - Windows Internet Explorer</TitleText>
            <WinButtons>
              <WinButton $tone="linear-gradient(135deg, #5a8cf4, #1c48d0)" aria-label="最小化"><MinGlyph /></WinButton>
              <WinButton $tone="linear-gradient(135deg, #5a8cf4, #1c48d0)" aria-label="最大化"><MaxGlyph /></WinButton>
              <WinButton $tone="linear-gradient(135deg, #f08868, #d03c14)" aria-label="关闭"><CloseGlyph /></WinButton>
            </WinButtons>
          </TitleBar>
          <Chrome>
            <NavRow>
              <TravelPair />
              <PageMenu type="button" aria-label="最近页面"><Caret fill="#1c4c88" w={9} /></PageMenu>
              <Field $h={22} $grow={322}>
                <IEPage />
                <Url><Latin>http://<b>127.0.0.1</b>/</Latin></Url>
                <DropButton type="button" aria-label="展开"><Chevron /></DropButton>
              </Field>
              <IconButton type="button" aria-label="兼容性视图"><BrokenPage /></IconButton>
              <IconButton type="button" aria-label="刷新"><Refresh /></IconButton>
              <IconButton type="button" aria-label="停止"><StopX /></IconButton>
              <span />
              <Field $h={22} $grow={255}>
                <MailSearch />
                <FieldInput aria-label="搜索" placeholder="Live Search" />
              </Field>
              <SearchPair>
                <IconButton type="button" aria-label="搜索"><Lens /></IconButton>
                <IconButton type="button" $w={13} aria-label="搜索选项"><Caret fill="#1c54dc" /></IconButton>
              </SearchPair>
            </NavRow>
            <MenuBar><Menus fav="收藏夹" /></MenuBar>
            <FavRow>
              <Command $w={69} $gap={3}><Star />收藏夹</Command>
              <Rule $h={20} $gap={7} />
              <button aria-label="添加到收藏夹"><Star add /></button>
            </FavRow>
            <TabRow>
              <Tab><IE /><Latin>http://127.0.0.1/</Latin></Tab>
              <NewTab aria-label="新选项卡" />
              <Commands>
                <Command $w={42} $gap={8} aria-label="主页"><Home /><Caret /></Command>
                <Command $w={41} $gap={11} aria-label="源"><Feed /><Caret fill="#c0c0b4" /></Command>
                <Command $w={27} aria-label="邮件"><Mail /></Command>
                <Command $w={42} $gap={8} aria-label="打印"><Printer /><Caret /></Command>
                <Command $w={64}><Caption label="页面" hot="P" /><Caret /></Command>
                <Command $w={64}><Caption label="安全" hot="S" /><Caret /></Command>
                <Command $w={60}><Caption label="工具" hot="O" /><Caret /></Command>
                <Command $w={40} $gap={1} aria-label="帮助"><Help /><Caret /></Command>
                <More aria-label="更多"><DoubleRight /></More>
              </Commands>
            </TabRow>
          </Chrome>
          <Viewport>
            <Page>
              <FormLine>
                <label htmlFor="fname"><Mixed size={13}>文件名:</Mixed></label>
                <NameBox><input id="fname" defaultValue="1" /></NameBox>
                <TextCursor />
              </FormLine>
              <Submit type="button">提 交</Submit>
              <Pointer width="14" height="24" viewBox="0 0 14 24">
                <path d="M1 1v18l4-4 3.500 7.500 3-1.300L8.300 14H13z" fill="#f4f4f4" stroke="#000" />
              </Pointer>
            </Page>
            <ScrollBar>
              <ScrollButton type="button" $up aria-label="向上滚动"><Chevron color="#c4c4bc" /></ScrollButton>
              <ScrollButton type="button" aria-label="向下滚动"><Chevron color="#c4c4bc" /></ScrollButton>
            </ScrollBar>
          </Viewport>
          <BrowserStatus>
            <span>完成</span>
            {[0, 1, 2, 3, 4, 5].map((n) => <StatusCell key={n} $w={24} />)}
            <StatusCell $w={160}><Globe /><Latin>Internet</Latin></StatusCell>
            <StatusCell $w={44}>
              <svg width="22" height="16" viewBox="0 0 22 16"><path d="M4 10a7 7 0 0 1 14 0z" fill="#dcdcdc" stroke="#a0a0a0" /><path d="M11 3v7" stroke="#a0a0a0" /></svg>
            </StatusCell>
            <StatusCell $w={95}><ZoomPlus /><Latin>100%</Latin><Caret /></StatusCell>
          </BrowserStatus>
        </Browser>
      </Desktop>
    </>
  );
}
